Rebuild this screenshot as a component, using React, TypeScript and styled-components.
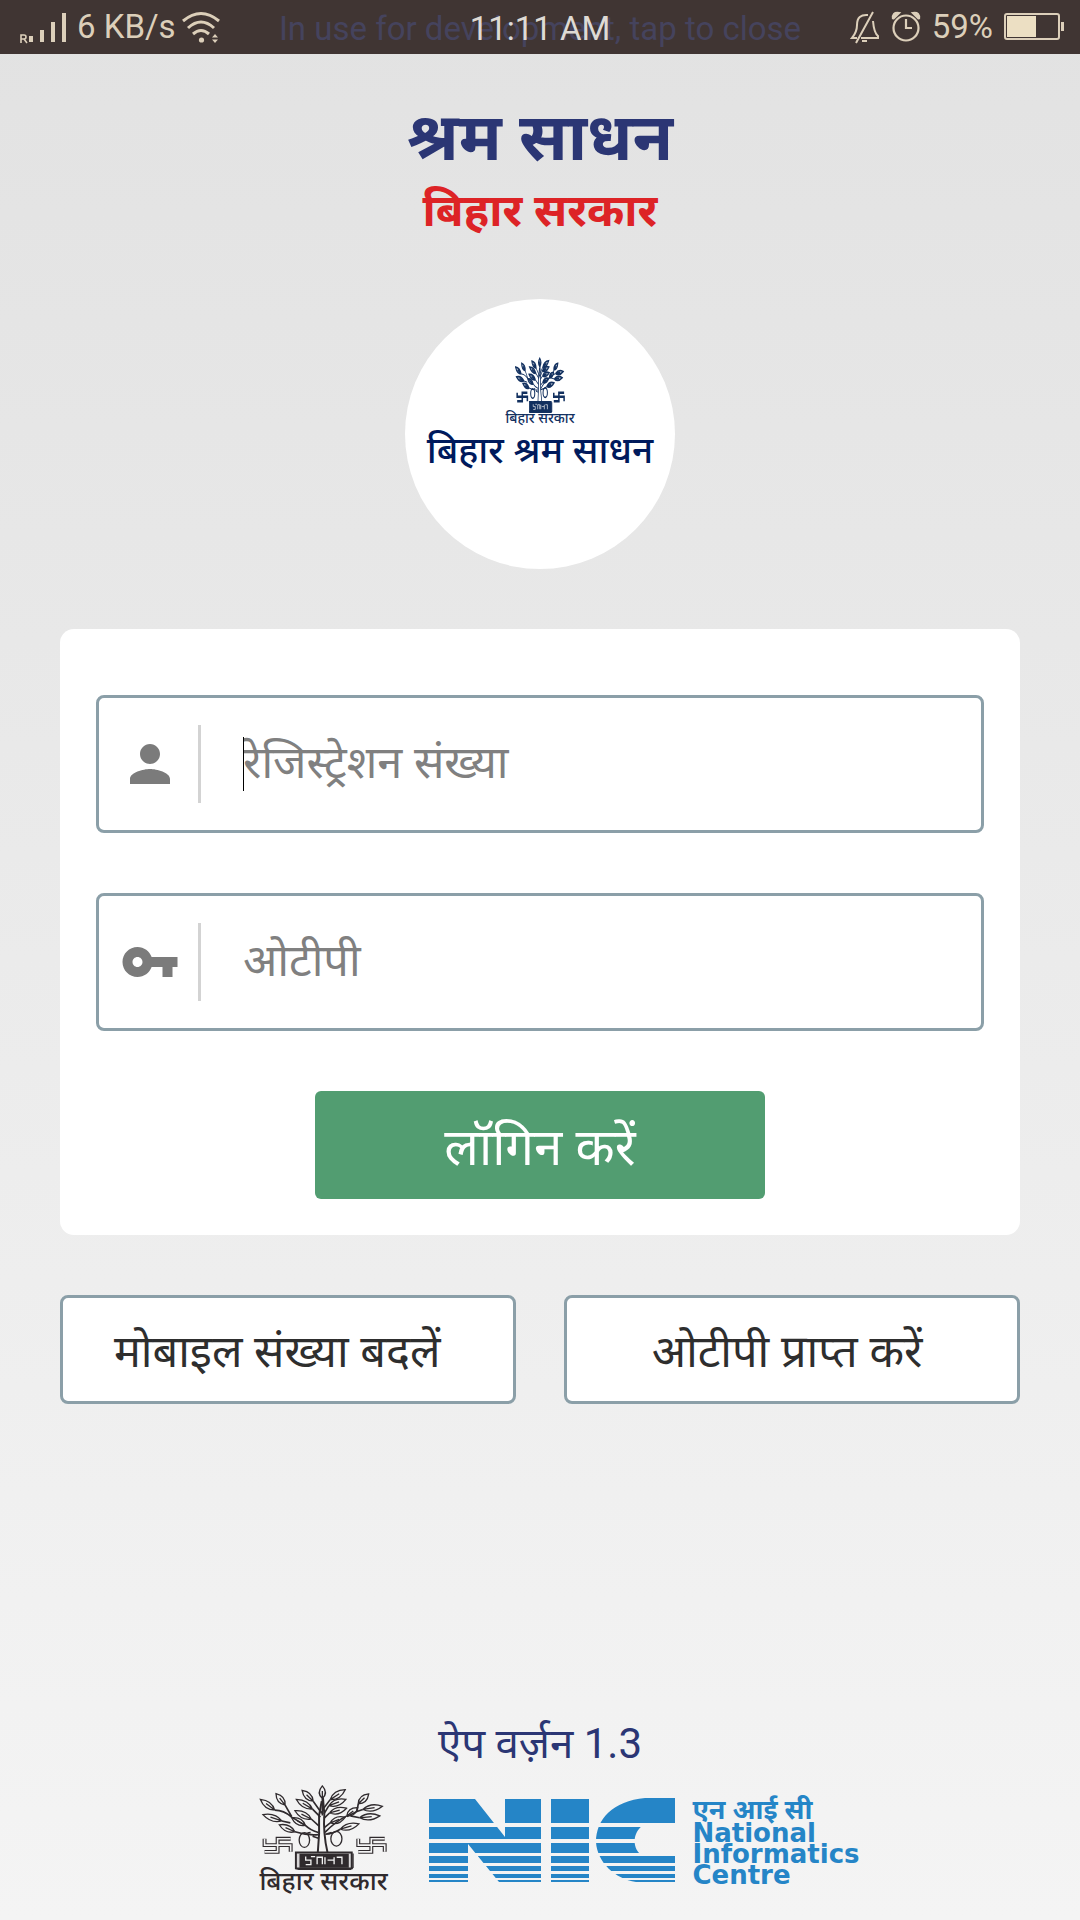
import React from "react";
import styled, { createGlobalStyle } from "styled-components";

const GlobalStyle = createGlobalStyle`
  *, *::before, *::after { box-sizing: border-box; }
  body {
    margin: 0;
    font-family: "Noto Sans", Roboto, sans-serif;
    background: #f4f4f4;
  }
  button, input { font: inherit; margin: 0; }
`;

const Page = styled.div`
  min-height: 100vh;
  display: flex;
  flex-direction: column;
  background: linear-gradient(#e2e2e2, #f4f4f4);
`;

const StatusBar = styled.div`
  position: relative;
  height: 54px;
  flex: none;
  display: flex;
  align-items: center;
  justify-content: space-between;
  padding: 0 16px 0 20px;
  background: #403533;
  color: #dccfba;
  font-family: Roboto, sans-serif;
  font-size: 33px;
  line-height: 54px;
`;

const StatusGroup = styled.div<{ $gap: number }>`
  display: flex;
  align-items: center;
  gap: ${(p) => p.$gap}px;
`;

const StatusOverlay = styled.div<{ $color: string }>`
  position: absolute;
  inset: 0;
  text-align: center;
  white-space: nowrap;
  color: ${(p) => p.$color};
  line-height: 58px;
`;

const Main = styled.main`
  flex: 1;
  display: flex;
  flex-direction: column;
  padding: 38px 60px 30px;
`;

const Title = styled.h1`
  margin: 0 0 2px;
  text-align: center;
  font-size: 66px;
  line-height: 84px;
  font-weight: 700;
  color: #2b3674;
`;

const Subtitle = styled.h2`
  margin: 0;
  text-align: center;
  font-size: 45px;
  line-height: 61px;
  font-weight: 700;
  color: #dd2326;
`;

const LogoCircle = styled.div`
  width: 270px;
  height: 270px;
  margin: 60px auto;
  padding-top: 58px;
  border-radius: 50%;
  background: #fff;
  color: #12305f;
  display: flex;
  flex-direction: column;
  align-items: center;
`;

const EmblemCaption = styled.span<{ $size: number; $line: number }>`
  font-size: ${(p) => p.$size}px;
  line-height: ${(p) => p.$line}px;
  font-weight: 500;
  white-space: nowrap;
`;

const LogoName = styled.span`
  font-size: 37px;
  line-height: 52px;
  font-weight: 500;
  color: #001a5c;
  white-space: nowrap;
`;

const Card = styled.form`
  display: flex;
  flex-direction: column;
  gap: 60px;
  padding: 66px 36px 36px;
  border-radius: 14px;
  background: #fff;
`;

const Field = styled.label`
  display: flex;
  align-items: center;
  height: 138px;
  padding-left: 21px;
  border: 3px solid #8b9fa8;
  border-radius: 8px;
  background: #fff;
`;

const Divider = styled.span`
  width: 3px;
  height: 78px;
  margin: 0 42px 0 18px;
  background: #d3d3d3;
`;

const InputWrap = styled.span`
  position: relative;
  flex: 1;
  display: flex;
`;

const Caret = styled.span`
  position: absolute;
  left: 0;
  top: 13px;
  width: 1px;
  height: 54px;
  background: #000;
`;

const TextInput = styled.input`
  width: 100%;
  height: 80px;
  padding: 0 0 8px;
  border: 0;
  outline: 0;
  background: transparent;
  font-size: 45px;
  color: #333;
  &::placeholder { color: #808080; opacity: 1; }
`;

const LoginButton = styled.button`
  align-self: center;
  width: 450px;
  max-width: 100%;
  height: 108px;
  padding: 0;
  border: 0;
  border-radius: 6px;
  background: #529d71;
  color: #fff;
  font-size: 51px;
  line-height: 60px;
`;

const Actions = styled.div`
  display: grid;
  grid-template-columns: 1fr 1fr;
  gap: 48px;
  margin-top: 60px;
`;

const ActionButton = styled.button`
  height: 109px;
  padding: 0 10px 0 0;
  border: 3px solid #8b9fa8;
  border-radius: 8px;
  background: #fff;
  color: #2e2e2e;
  font-size: 45px;
  line-height: 60px;
`;

const Footer = styled.footer`
  margin-top: auto;
  display: flex;
  flex-direction: column;
  align-items: center;
`;

const Version = styled.p`
  margin: 0 0 10px;
  font-family: Roboto, "Noto Sans", sans-serif;
  font-size: 42px;
  line-height: 60px;
  color: #2b3674;
`;

const Partners = styled.div`
  display: flex;
  align-items: center;
  gap: 19px;
  padding-left: 16px;
`;

const BiharLogo = styled.div`
  width: 174px;
  display: flex;
  flex-direction: column;
  align-items: center;
  color: #2f2a2d;
`;

const NicLogo = styled.div`
  display: flex;
  align-items: center;
  gap: 17px;
  padding-top: 6px;
  color: #2585c7;
`;

const NicText = styled.div`
  display: flex;
  flex-direction: column;
  font-family: "DejaVu Sans", sans-serif;
  font-weight: 700;
  font-size: 26px;
  line-height: 21px;
`;

const NicHindi = styled.span`
  font-family: "Noto Sans", sans-serif;
  font-size: 27px;
  line-height: 28px;
`;

type Leaf = [number, number, number, number];

/* base x, base y, tip x, tip y */
const leaves: Leaf[] = [
  [298, 292, 298, 252], [270, 300, 236, 266], [322, 295, 368, 264],
  [268, 325, 218, 294], [318, 314, 370, 294], [320, 337, 372, 322],
  [184, 312, 156, 276], [152, 328, 108, 294], [174, 362, 116, 342],
  [214, 396, 166, 374], [264, 356, 214, 330], [246, 376, 204, 352],
  [322, 368, 368, 350], [373, 346, 406, 320], [408, 308, 440, 277],
  [422, 326, 482, 316], [412, 352, 474, 346], [353, 388, 410, 371],
];

const leafPath = ([bx, by, tx, ty]: Leaf) => {
  const dx = tx - bx;
  const dy = ty - by;
  const len = Math.hypot(dx, dy);
  const nx = (-dy / len) * 19;
  const ny = (dx / len) * 19;
  const mx = bx + dx * 0.45;
  const my = by + dy * 0.45;
  return `M${bx} ${by}Q${mx + nx} ${my + ny} ${tx} ${ty}Q${mx - nx} ${my - ny} ${bx} ${by}M${bx} ${by}L${bx + dx * 0.6} ${by + dy * 0.6}`;
};

const crosses = [
  "M121 418V438H201V459M201 418H161V459H121",
  "M408 418V438H489V459M489 418H448V459H408",
];

function Emblem({ width, height, solid }: { width: number; height: number; solid?: boolean }) {
  return (
    <svg width={width} height={height} viewBox="104 246 392 270" preserveAspectRatio="none" fill="none"
      stroke="currentColor" strokeWidth={solid ? 8 : 4} aria-hidden="true">
      <path d="M284 462Q290 400 288 345L296 300M314 462Q300 400 304 340L300 290" strokeWidth="6" />
      <path d="M298 292V345M270 300L296 338M322 295L302 322M268 325L292 350M318 314L303 340M320 337L303 354M184 312L204 348M152 328Q180 328 204 350M204 350L246 376M174 362L200 368M264 356L288 378M246 376Q262 392 286 398M214 396Q250 408 286 405M322 368L305 382M373 346Q340 362 306 398M408 308L404 332L373 348M422 326L404 332M412 352L384 346M353 388Q330 402 307 404M262 398L252 400M268 410L286 416M308 404L326 398" strokeWidth="5" />
      {leaves.map((leaf, i) => (
        <path key={i} d={leafPath(leaf)} fill={solid ? "currentColor" : "none"} fillOpacity=".35" />
      ))}
      <ellipse cx="243" cy="422" rx="16" ry="23" />
      <ellipse cx="341" cy="418" rx="17" ry="23" />
      {crosses.map((d) => (
        <g key={d}>
          <path d={d} strokeWidth="12" />
          {!solid && <path d={d} stroke="#f3f3f3" strokeWidth="5" />}
        </g>
      ))}
      <path d="M217 461H388V511H217Z" strokeWidth="6" fill={solid ? "currentColor" : "#d8d6d7"} />
      <path d="M231 468H376V506H231Z" strokeWidth="6" fill="currentColor" />
      <path d="M247 474V485H263V499H247M276 474H263M282 498V476H298V498M306 498V476M314 485H334V498M334 476V485M342 476H358V498" stroke="#f3f3f3" strokeWidth="4" />
      <path d="M216 511L226 514H384L392 508V464" />
    </svg>
  );
}

/* Banded mark: horizontal stripes that get thinner towards the bottom */
const bands = [
  [0, 25], [29, 12], [45, 10], [58, 7], [68, 5], [76, 4], [82, 2],
];

function NicMark() {
  return (
    <svg width="246" height="84" viewBox="0 0 246 84" role="img" aria-label="NIC">
      <defs>
        <clipPath id="nic-shape">
          <path d="M0 1H46L76 39V1H112V84H70L39 46V84H0ZM122 1H160V84H122ZM246 0H216C184 3 167 21 167 44C168 64 186 81 207 84H246V58H214C203 52 203 36 213 28L216 25H246Z" />
        </clipPath>
      </defs>
      <g clipPath="url(#nic-shape)" fill="currentColor">
        {bands.map(([y, h]) => (
          <rect key={y} x="0" y={y} width="246" height={h} />
        ))}
      </g>
    </svg>
  );
}

export default function App() {
  return (
    <Page>
      <GlobalStyle />
      <StatusBar>
        <StatusOverlay $color="#45435d">In use for development, tap to close</StatusOverlay>
        <StatusOverlay $color="#dedad4">11:11 AM</StatusOverlay>
        <StatusGroup $gap={5}>
          <svg width="52" height="34" viewBox="20 10 52 34" fill="currentColor" aria-hidden="true">
            <path d="M21 43V35H24Q26 35 26 37T24 39H21M24 39L27 43" fill="none" stroke="currentColor" strokeWidth="1.6" />
            <path d="M29 36h4v6h-4zM40 30h4v12h-4zM51 22h4v20h-4zM62 13h4v29h-4z" />
          </svg>
          <span>6 KB/s</span>
          <svg width="40" height="34" viewBox="181 10 40 34" fill="none" stroke="currentColor" strokeWidth="3" aria-hidden="true">
            <path d="M183 21Q201 6 219 21M188 28Q201 16 214 28M193 34Q201 27 209 34" />
            <circle cx="201.500" cy="40" r="2.600" fill="currentColor" stroke="none" />
            <path d="M212 37.500L215 34L218 37.500ZM212 39.500H218L215 43Z" fill="currentColor" stroke="none" />
          </svg>
        </StatusGroup>
        <StatusGroup $gap={11}>
          <svg width="30" height="34" viewBox="851 11 30 34" fill="none" stroke="currentColor" strokeWidth="2" aria-hidden="true">
            <path d="M869 16Q858 15 858 26Q858 33 853 39H858M874 22Q875 34 879 37V39H862M874 13L857 44M863 42H868" />
          </svg>
          <svg width="30" height="34" viewBox="891 11 30 34" fill="none" stroke="currentColor" strokeWidth="2.200" aria-hidden="true">
            <circle cx="906" cy="29" r="12.500" />
            <path d="M906 20V29H912" />
            <path d="M893 20Q892 13 899 14L893 20M919 20Q920 13 913 14L919 20" fill="currentColor" />
          </svg>
          <span>59%</span>
          <svg width="60" height="28" viewBox="0 0 60 28" fill="none" aria-hidden="true">
            <rect x="1" y="1" width="54" height="25" rx="2" stroke="currentColor" strokeWidth="2" />
            <rect x="3" y="3" width="29" height="21" fill="#ecdfc3" />
            <rect x="57" y="9" width="3" height="9" fill="currentColor" />
          </svg>
        </StatusGroup>
      </StatusBar>

      <Main>
        <Title>श्रम साधन</Title>
        <Subtitle>बिहार सरकार</Subtitle>
        <LogoCircle>
          <Emblem width={50} height={56} solid />
          <EmblemCaption $size={14} $line={10}>बिहार सरकार</EmblemCaption>
          <LogoName>बिहार श्रम साधन</LogoName>
        </LogoCircle>

        <Card onSubmit={(e) => e.preventDefault()}>
          <Field>
            <svg width="60" height="60" viewBox="0 0 24 24" fill="#7b7b7b" aria-hidden="true">
              <path d="M12 12c2.210 0 4-1.790 4-4s-1.790-4-4-4-4 1.790-4 4 1.790 4 4 4zm0 2c-2.670 0-8 1.340-8 4v2h16v-2c0-2.660-5.330-4-8-4z" />
            </svg>
            <Divider />
            <InputWrap>
              <TextInput type="text" aria-label="रेजिस्ट्रेशन संख्या" placeholder="रेजिस्ट्रेशन संख्या" />
              <Caret />
            </InputWrap>
          </Field>
          <Field>
            <svg width="60" height="60" viewBox="0 0 24 24" fill="#7b7b7b" aria-hidden="true">
              <path d="M12.650 10C11.830 7.670 9.610 6 7 6c-3.310 0-6 2.690-6 6s2.690 6 6 6c2.610 0 4.830-1.670 5.650-4H17v4h4v-4h2v-4H12.650zM7 14c-1.100 0-2-.9-2-2s.9-2 2-2 2 .9 2 2-.9 2-2 2z" />
            </svg>
            <Divider />
            <InputWrap>
              <TextInput type="text" aria-label="ओटीपी" placeholder="ओटीपी" />
            </InputWrap>
          </Field>
          <LoginButton type="submit">लॉगिन करें</LoginButton>
        </Card>

        <Actions>
          <ActionButton type="button">मोबाइल संख्या बदलें&nbsp;</ActionButton>
          <ActionButton type="button">ओटीपी प्राप्त करें</ActionButton>
        </Actions>

        <Footer>
          <Version>ऐप वर्ज़न 1.3</Version>
          <Partners>
            <BiharLogo>
              <Emblem width={128} height={86} />
              <EmblemCaption $size={26} $line={20}>बिहार सरकार</EmblemCaption>
            </BiharLogo>
            <NicLogo>
              <NicMark />
              <NicText>
                <NicHindi>एन आई सी</NicHindi>
                <span>National</span>
                <span>Informatics</span>
                <span>Centre</span>
              </NicText>
            </NicLogo>
          </Partners>
        </Footer>
      </Main>
    </Page>
  );
}
